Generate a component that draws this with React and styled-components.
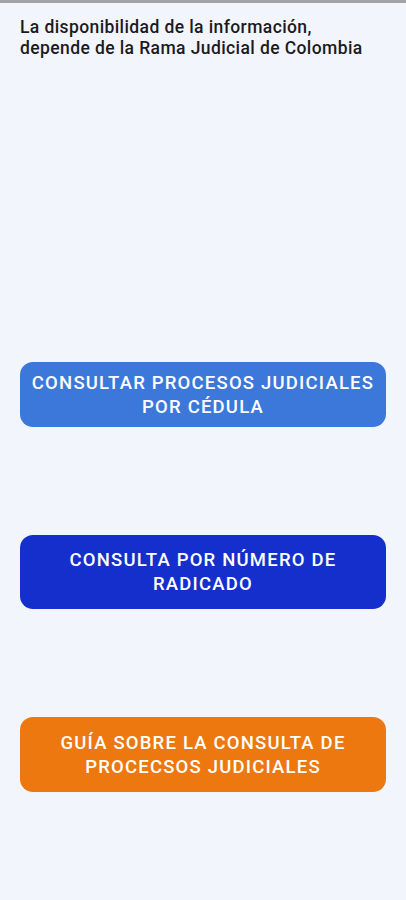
import React from 'react';
import styled, { createGlobalStyle } from 'styled-components';

const GlobalStyle = createGlobalStyle`
  html, body {
    margin: 0;
    padding: 0;
    background: #f3f5fd;
  }
  body {
    font-family: Roboto, "Liberation Sans", sans-serif;
  }
`;

const Screen = styled.div`
  width: 406px;
  height: 900px;
  background: #f3f5fd;
  border-top: 3px solid #a3a3a6;
  box-sizing: border-box;
  display: flex;
  flex-direction: column;
`;

const Notice = styled.p`
  margin: 0;
  padding: 14px 20px 0;
  font-size: 17.5px;
  line-height: 20.5px;
  font-weight: 500;
  color: #1b1b1f;
  letter-spacing: 0.4px;
`;

const Menu = styled.div`
  display: flex;
  flex-direction: column;
  padding: 0 20px;
  margin-top: 304px;
`;

const ActionButton = styled.button`
  width: 366px;
  height: ${p => p.$height}px;
  margin-top: ${p => p.$gap}px;
  border: none;
  border-radius: 13px;
  background: ${p => p.$color};
  color: #ffffff;
  font-family: Roboto, "Liberation Sans", sans-serif;
  font-size: 18.5px;
  font-weight: 500;
  line-height: 24px;
  letter-spacing: 1.2px;
  text-align: center;
  padding: 0 8px;
  cursor: pointer;
`;

const buttons = [
  { label: 'CONSULTAR PROCESOS JUDICIALES POR CÉDULA', color: '#3b78d9', height: 65, gap: 0 },
  { label: 'CONSULTA POR NÚMERO DE RADICADO', color: '#152fcc', height: 74, gap: 108 },
  { label: 'GUÍA SOBRE LA CONSULTA DE PROCECSOS JUDICIALES', color: '#ec780f', height: 75, gap: 108 },
];

export default function App() {
  return (
    <>
      <GlobalStyle />
      <Screen>
        <Notice>
          La disponibilidad de la información,
          <br />
          depende de la Rama Judicial de Colombia
        </Notice>
        <Menu>
          {buttons.map(b => (
            <ActionButton key={b.label} $color={b.color} $height={b.height} $gap={b.gap}>
              {b.label}
            </ActionButton>
          ))}
        </Menu>
      </Screen>
    </>
  );
}
